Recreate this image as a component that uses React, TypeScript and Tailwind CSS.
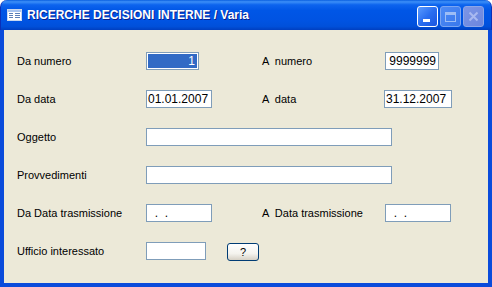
import React from "react";

const lbl = "text-[11px] text-black whitespace-pre leading-none";
const box = "h-[18px] border border-[#7F9DB9] bg-white text-[12px] leading-[16px] text-black overflow-hidden";

function WinIcon() {
  return (
    <svg width="15" height="12" viewBox="0 0 15 12" className="shrink-0">
      <rect x="0.5" y="0.5" width="14" height="11" fill="#ffffff" stroke="#C8D8F0" />
      <rect x="1" y="1" width="13" height="2" fill="#A9C4EE" />
      <rect x="2" y="4" width="4" height="1" fill="#5C7FB8" />
      <rect x="8" y="4" width="5" height="1" fill="#5C7FB8" />
      <rect x="2" y="6" width="4" height="1" fill="#5C7FB8" />
      <rect x="8" y="6" width="5" height="1" fill="#5C7FB8" />
      <rect x="2" y="8" width="4" height="1" fill="#5C7FB8" />
      <rect x="8" y="8" width="5" height="1" fill="#5C7FB8" />
    </svg>
  );
}

export default function App() {
  return (
    <div className="w-[492px] h-[287px] flex flex-col bg-white" style={{ fontFamily: "'Liberation Sans', Arial, sans-serif" }}>
      {/* title bar */}
      <div className="h-[30px] shrink-0 rounded-t-[7px] flex items-center pl-[6px] pr-[7px] bg-[linear-gradient(to_bottom,#0A5FE0_0%,#3C8FF8_6%,#0D64EE_16%,#0056E6_35%,#0053E2_70%,#0050DA_88%,#003FC0_100%)] border-x border-[#0A2FB8]">
        <WinIcon />
        <span className="ml-[5px] text-white font-bold text-[12px] leading-none [text-shadow:1px_1px_0_#0A1E8C]">
          RICERCHE DECISIONI INTERNE / Varia
        </span>
        <div className="ml-auto flex gap-[2px] mt-[3px]">
          <div className="w-[21px] h-[21px] rounded-[3px] border border-white bg-[linear-gradient(135deg,#5A9BFF_0%,#2A6EF0_50%,#1A55E0_100%)] flex items-end pl-[5px] pb-[4px]">
            <div className="w-[7px] h-[3px] bg-white" />
          </div>
          <div className="w-[21px] h-[21px] rounded-[3px] border border-[#7AA5F2] bg-[linear-gradient(135deg,#4D8BF5_0%,#3A78EC_100%)] flex items-center justify-center">
            <div className="w-[11px] h-[10px] border border-[#9DBDF5] border-t-[3px]" />
          </div>
          <div className="w-[21px] h-[21px] rounded-[3px] border border-[#8DA6E8] bg-[linear-gradient(135deg,#7C95E6_0%,#6C86DE_100%)] flex items-center justify-center">
            <svg width="11" height="11" viewBox="0 0 11 11">
              <path d="M1.5 1.5 L9.5 9.5 M9.5 1.5 L1.5 9.5" stroke="#A9B9F0" strokeWidth="2" />
            </svg>
          </div>
        </div>
      </div>
      {/* client */}
      <div className="flex-1 bg-[#ECE9D8] border-x-4 border-b-4 border-[#0A4BDB]">
        <div className="grid grid-cols-[129px_116px_123px_1fr] gap-y-[20px] pt-[22px] pl-[13px] items-center auto-rows-[18px]">
          <span className={lbl}>Da numero</span>
          <div className={`${box} w-[53px] p-[1px]`}>
            <div className="h-full bg-[#316AC5] text-white text-right pr-[2px] leading-[14px]">1</div>
          </div>
          <span className={lbl}>A  numero</span>
          <div className={`${box} w-[54px] text-right pr-[2px]`}>9999999</div>

          <span className={lbl}>Da data</span>
          <div className={`${box} w-[66px] pl-[1px]`}>01.01.2007</div>
          <span className={lbl}>A  data</span>
          <div className={`${box} w-[68px] pl-[1px] -ml-[1px]`}>31.12.2007</div>

          <span className={lbl}>Oggetto</span>
          <div className={`${box} col-span-3 w-[246px]`} />

          <span className={lbl}>Provvedimenti</span>
          <div className={`${box} col-span-3 w-[246px]`} />

          <span className={lbl}>Da Data trasmissione</span>
          <div className={`${box} w-[66px] pl-[1px] whitespace-pre`}>{"  .  ."}</div>
          <span className={lbl}>A  Data trasmissione</span>
          <div className={`${box} w-[66px] pl-[1px] whitespace-pre`}>{"  .  ."}</div>

          <span className={lbl}>Ufficio interessato</span>
          <div className="col-span-3 flex items-start gap-[21px] h-[18px]">
            <div className={`${box} w-[60px]`} />
            <div className="mt-[1px] w-[32px] h-[18px] rounded-[3px] border border-[#003C74] bg-[linear-gradient(to_bottom,#FFFFFF_0%,#F4F3EE_60%,#D6D0C5_100%)] flex items-center justify-center text-[11px] leading-none text-black">?</div>
          </div>
        </div>
      </div>
    </div>
  );
}
